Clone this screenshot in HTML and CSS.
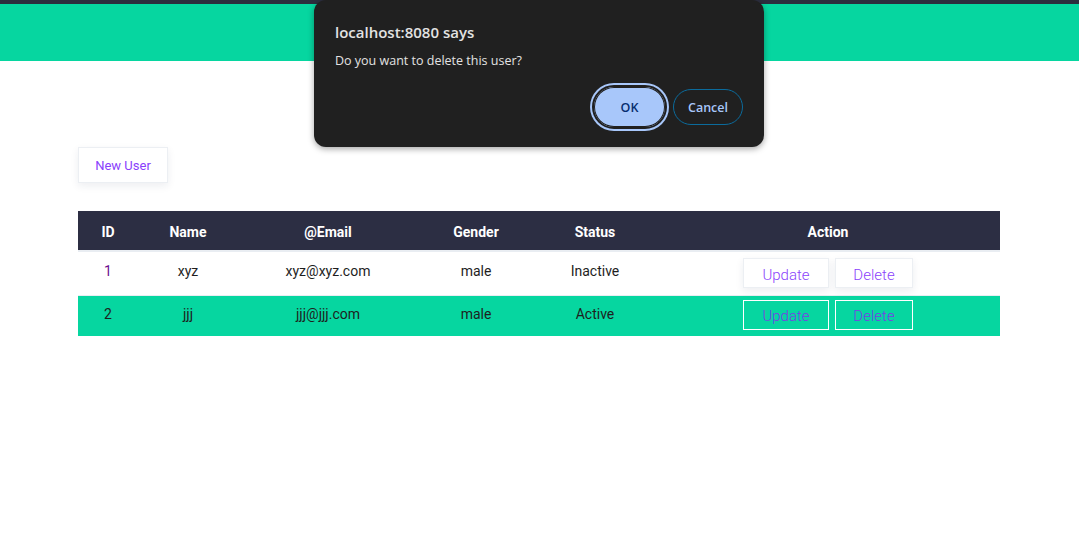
FILE: index.html
```html
<!DOCTYPE html>
<html>
<head>
<meta charset="utf-8">
<link rel="stylesheet" href="styles.css">
</head>
<body>
<div class="topline"></div>
<header class="navbar"></header>
<main class="content">
  <button class="btn new-user">New User</button>
  <table class="users">
    <thead>
      <tr>
        <th class="c-id">ID</th>
        <th class="c-name">Name</th>
        <th class="c-email">@Email</th>
        <th class="c-gender">Gender</th>
        <th class="c-status">Status</th>
        <th class="c-action">Action</th>
      </tr>
    </thead>
    <tbody>
      <tr class="row-1">
        <td class="id-purple">1</td>
        <td>xyz</td>
        <td>xyz@xyz.com</td>
        <td>male</td>
        <td>Inactive</td>
        <td class="actions"><button class="btn act upd">Update</button><button class="btn act del">Delete</button></td>
      </tr>
      <tr class="row-2">
        <td>2</td>
        <td>jjj</td>
        <td>jjj@jjj.com</td>
        <td>male</td>
        <td>Active</td>
        <td class="actions"><button class="btn act upd">Update</button><button class="btn act del">Delete</button></td>
      </tr>
    </tbody>
  </table>
</main>
<div class="dialog">
  <div class="dlg-title">localhost:8080 says</div>
  <div class="dlg-msg">Do you want to delete this user?</div>
  <div class="dlg-buttons">
    <button class="dlg-ok">OK</button>
    <button class="dlg-cancel">Cancel</button>
  </div>
</div>
</body>
</html>
```
FILE: styles.css
```css
* { box-sizing: border-box; }
html, body { margin: 0; padding: 0; background: #fff; }
body { font-family: Roboto, "Liberation Sans", sans-serif; width: 1079px; height: 560px; overflow: hidden; }

.topline { height: 4px; background: #2c2e3e; }
.navbar { height: 57px; background: #06d6a0; }

.content { padding: 86px 79px 0 78px; }

.btn {
  font-family: Roboto, "Liberation Sans", sans-serif;
  font-weight: 300;
  background: #fff;
  border: 1px solid #eceff3;
  color: #8a3ffc;
  cursor: pointer;
  box-shadow: 0 3px 8px rgba(30, 40, 80, 0.08);
}
.new-user {
  display: block;
  width: 90px; height: 36px;
  font-size: 13px;
  font-weight: 400;
  padding: 0;
}

.users {
  margin-top: 28px;
  width: 922px;
  border-collapse: collapse;
  table-layout: fixed;
  font-size: 14px;
}
.users th {
  background: #2c2e43;
  color: #fff;
  height: 40px;
  font-weight: 700;
  font-size: 14px;
  text-align: center;
  padding: 2px 0 0 0;
}
.c-id { width: 60px; }
.c-name { width: 100px; }
.c-email { width: 180px; }
.c-gender { width: 116px; }
.c-status { width: 122px; }
.c-action { width: 344px; }

.users td {
  text-align: center;
  color: #1e1e1e;
  font-weight: 400;
  padding: 0;
  vertical-align: top;
}
.row-1 td { height: 44px; padding-top: 11px; border-top: 2px solid #e9edf2; }
.row-1 td.actions { padding-top: 6px; }
.row-2 td { height: 41px; background: #06d6a0; padding-top: 10px; border-top: 1px solid #e9edf2; }
.row-2 td.actions { padding-top: 4px; }
.id-purple { color: #6b0f8f !important; }

.actions { white-space: nowrap; }
.act {
  height: 30px;
  font-size: 15px;
  padding: 3px 0 0 0;
  margin: 0 3px;
}
.upd { width: 86px; }
.del { width: 78px; }
.row-2 .act {
  background: transparent;
  border: 1px solid #fff;
  box-shadow: none;
  color: #7a3ae6;
}

.dialog {
  position: absolute;
  left: 314px; top: 0;
  width: 450px; height: 147px;
  background: #202020;
  border-radius: 12px;
  box-shadow: 0 2px 6px rgba(0,0,0,0.35);
  font-family: "Open Sans", "Noto Sans", sans-serif;
  padding: 22px 21px 0 21px;
}
.dlg-title { color: #e3e3e3; font-size: 15px; font-weight: 600; line-height: 20px; }
.dlg-msg { color: #e3e3e3; font-size: 12.5px; line-height: 18px; margin-top: 10px; }
.dlg-buttons { display: flex; justify-content: flex-end; gap: 6px; margin-top: 15px; }
.dlg-ok {
  width: 75px; height: 44px;
  border-radius: 22px;
  background: #a8c7fa;
  border: 2px solid #202020;
  box-shadow: 0 0 0 2px #a8c7fa, inset 0 0 0 1px #202020;
  outline: none;
  color: #062e6f;
  font-family: "Open Sans", "Noto Sans", sans-serif;
  font-size: 12.5px;
  font-weight: 600;
  padding: 0;
}
.dlg-cancel {
  width: 70px; height: 36px;
  margin-top: 4px;
  border-radius: 18px;
  background: transparent;
  border: 1px solid #0b6b9c;
  color: #a8c7fa;
  font-family: "Open Sans", "Noto Sans", sans-serif;
  font-size: 12.5px;
  font-weight: 600;
  padding: 0;
}
```
